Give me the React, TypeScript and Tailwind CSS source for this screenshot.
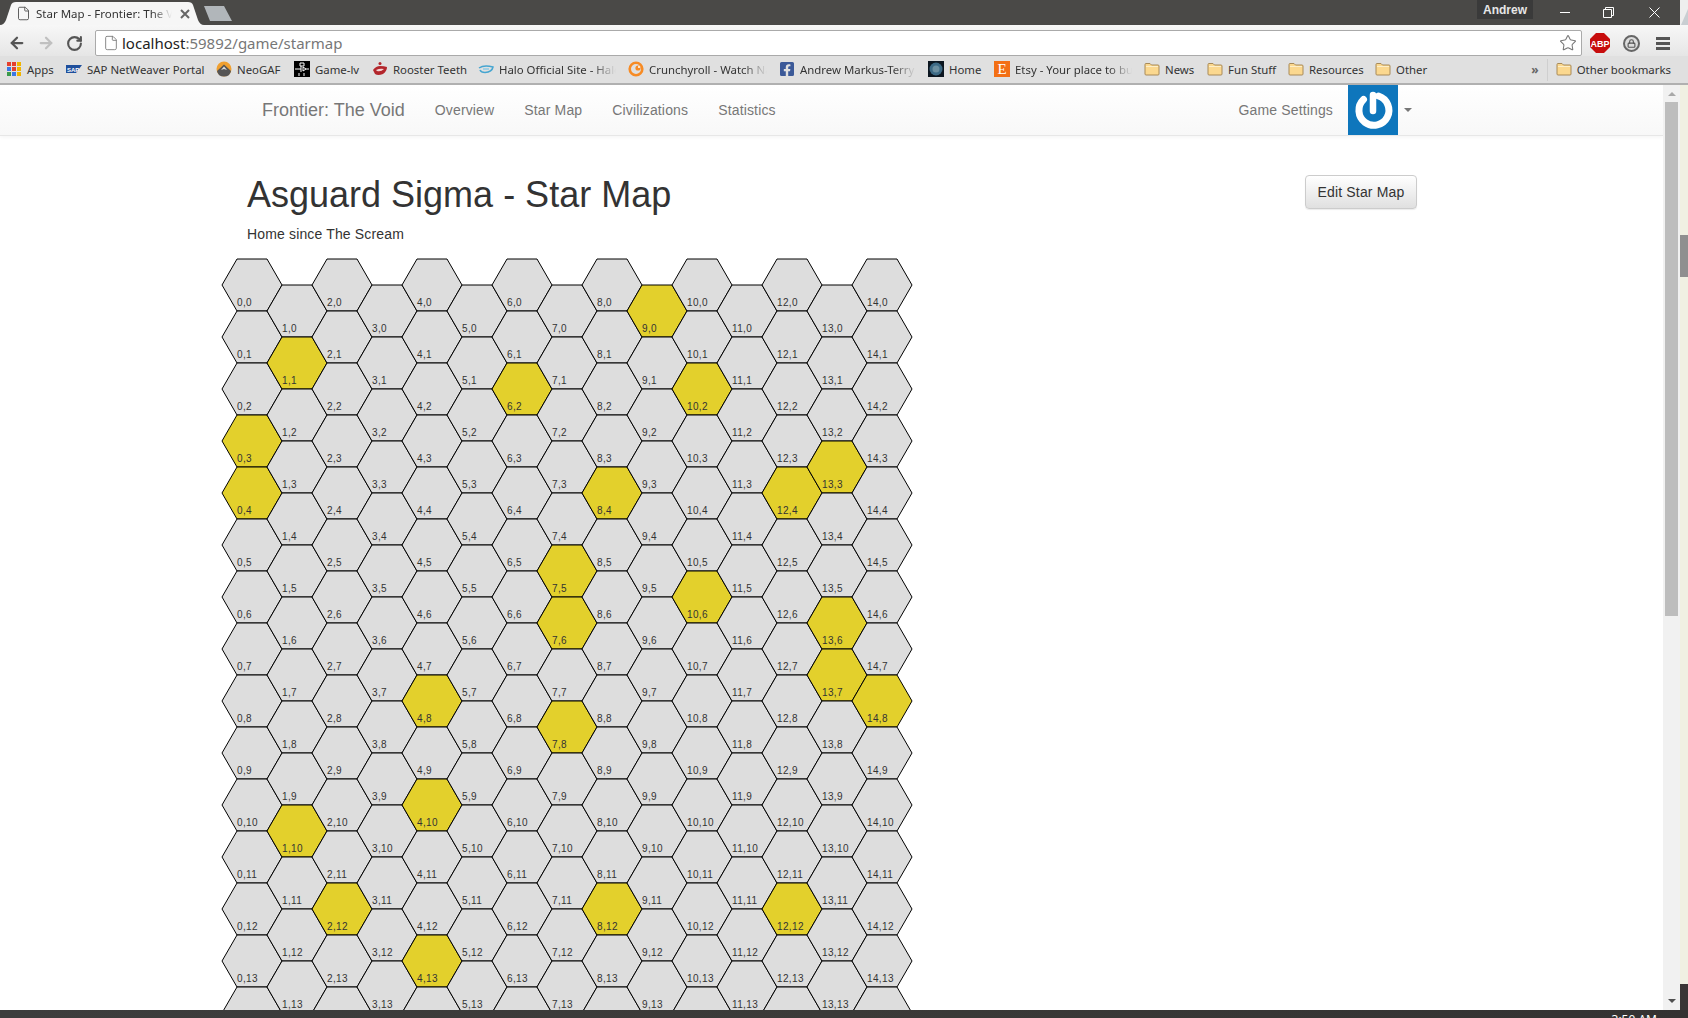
import { ArrowLeft, ArrowRight, RotateCw, Star, File, Lock } from 'lucide-react';
import { FaFacebookSquare } from 'react-icons/fa';

const YELLOW = new Set([
  '9,0', '1,1', '6,2', '10,2', '0,3', '0,4', '13,3', '12,4', '8,4', '7,5', '7,6', '10,6',
  '13,6', '13,7', '14,8', '4,8', '7,8', '4,10', '1,10', '2,12', '8,12', '12,12', '4,13',
]);

const COLUMNS = Array.from({ length: 15 }, (_, i) => i);
const ROWS = Array.from({ length: 15 }, (_, i) => i);

function Hex({ col, row }: { col: number; row: number }) {
  const on = YELLOW.has(`${col},${row}`);
  return (
    <div className="relative h-[52px] w-[60px] shrink-0">
      <svg className="absolute inset-0 overflow-visible" width="60" height="52">
        <polygon
          points="0,26 15,0 45,0 60,26 45,52 15,52"
          fill={on ? '#e3d02c' : '#dddddd'}
          stroke="#000"
          strokeWidth="1"
        />
      </svg>
      {/* the last row runs under the taskbar, its labels never show */}
      {row < 14 && (
        <span className="absolute left-[15px] top-[38px] text-[10px] leading-[12px] tracking-[0.35px] whitespace-nowrap text-[#333]">
          {col},{row}
        </span>
      )}
    </div>
  );
}

function FolderIcon() {
  return (
    <svg width="16" height="16" viewBox="0 0 16 16">
      <path d="M1 3.5 Q1 2.5 2 2.5 H6 L7.5 4 H14 Q15 4 15 5 V13 Q15 14 14 14 H2 Q1 14 1 13 Z" fill="#fbd88f" stroke="#a88a58" strokeWidth="1" />
      <path d="M2 5.5 H14" stroke="#fdeec8" strokeWidth="1" />
    </svg>
  );
}

function AppsIcon() {
  const colors = ['#e5402f', '#e5402f', '#f0b400', '#3b78e7', '#e5402f', '#f0b400', '#3b9a4a', '#3b78e7', '#f0b400'];
  return (
    <div className="grid h-[14px] w-[14px] grid-cols-3 gap-[1px]">
      {colors.map((c, i) => (
        <div key={i} style={{ backgroundColor: c }} />
      ))}
    </div>
  );
}

function SapIcon() {
  return (
    <svg width="16" height="16" viewBox="0 0 16 16">
      <polygon points="0,4 16,4 10,12 0,12" fill="#1f4f9c" />
      <text x="1" y="10.5" fontSize="6" fontWeight="700" fill="#fff" fontFamily="Liberation Sans, sans-serif">SAP</text>
    </svg>
  );
}

function NeoGafIcon() {
  return (
    <svg width="16" height="16" viewBox="0 0 16 16">
      <circle cx="8" cy="8" r="7.5" fill="#f0a030" />
      <path d="M1 10 L8 3.5 L15 10 Q14 15.5 8 15.5 Q2 15.5 1 10 Z" fill="#555" />
      <path d="M5 9 L8 5.5 L11 9 L8 8 Z" fill="#ddd" />
    </svg>
  );
}

function GameIcon() {
  return (
    <svg width="16" height="16" viewBox="0 0 16 16">
      <rect width="16" height="16" fill="#000" />
      <path d="M6 2 H10 V5 H6 Z M1 8 H7 M7 5 V11 M9 6 L12 8 L9 10 Z M12 8 H15 M5 12 V15 M10 12 V15" fill="none" stroke="#fff" strokeWidth="1" />
    </svg>
  );
}

function RoosterIcon() {
  return (
    <svg width="16" height="16" viewBox="0 0 16 16">
      <path d="M1 9 Q4 5 8 5 Q12 5 15 6 Q15 10 11 13 Q6 15 3 13 Z" fill="#b3262c" />
      <path d="M4 9 Q8 7 12 8 Q9 11 5 10 Z" fill="#f4d5d5" />
      <circle cx="8" cy="2.5" r="1.5" fill="#b3262c" />
    </svg>
  );
}

function HaloIcon() {
  return (
    <svg width="16" height="16" viewBox="0 0 16 16">
      <path d="M1 7 Q6 3.5 15 6 Q14 11 7 11.5 Q3 11.5 2 9" fill="none" stroke="#45a5d0" strokeWidth="1.5" />
      <path d="M5 8 H11" stroke="#8ccbe6" strokeWidth="1.5" />
    </svg>
  );
}

function CrunchyIcon() {
  return (
    <svg width="16" height="16" viewBox="0 0 16 16">
      <circle cx="8" cy="8" r="6.3" fill="none" stroke="#f78b24" strokeWidth="2.6" />
      <circle cx="10" cy="7" r="2.6" fill="#f78b24" />
      <circle cx="11" cy="6" r="1" fill="#fff" />
    </svg>
  );
}

function HomeIcon() {
  return (
    <svg width="16" height="16" viewBox="0 0 16 16">
      <rect width="16" height="16" fill="#0c1620" />
      <circle cx="8" cy="8" r="6.5" fill="#3d6a85" />
      <circle cx="8" cy="8" r="3.5" fill="#6c8fa0" />
    </svg>
  );
}

function EtsyIcon() {
  return (
    <div className="flex h-4 w-4 items-center justify-center bg-[#f36f14] font-['Liberation_Serif',serif] text-[15px] leading-none text-white">E</div>
  );
}

const BOOKMARKS = [
  { label: 'SAP NetWeaver Portal', icon: <SapIcon />, width: 'w-[117px]', fade: false },
  { label: 'NeoGAF', icon: <NeoGafIcon />, width: 'w-[45px]', fade: false },
  { label: 'Game-lv', icon: <GameIcon />, width: 'w-[45px]', fade: false },
  { label: 'Rooster Teeth', icon: <RoosterIcon />, width: 'w-[73px]', fade: false },
  { label: 'Halo Official Site - Halo', icon: <HaloIcon />, width: 'w-[117px]', fade: true },
  { label: 'Crunchyroll - Watch Naruto', icon: <CrunchyIcon />, width: 'w-[118px]', fade: true },
  { label: 'Andrew Markus-Terry', icon: <FaFacebookSquare size={16} color="#3b5998" />, width: 'w-[116px]', fade: true },
  { label: 'Home', icon: <HomeIcon />, width: 'w-[33px]', fade: false },
  { label: 'Etsy - Your place to buy', icon: <EtsyIcon />, width: 'w-[117px]', fade: true },
  { label: 'News', icon: <FolderIcon />, width: 'w-[30px]', fade: false },
  { label: 'Fun Stuff', icon: <FolderIcon />, width: 'w-[48px]', fade: false },
  { label: 'Resources', icon: <FolderIcon />, width: 'w-[54px]', fade: false },
  { label: 'Other', icon: <FolderIcon />, width: 'w-[33px]', fade: false },
];

function Bookmark({ label, icon, width, fade }: { label: string; icon: React.ReactNode; width: string; fade: boolean }) {
  return (
    <div className="flex shrink-0 items-center gap-[5px]">
      <div className="flex h-4 w-4 items-center justify-center">{icon}</div>
      <span
        className={`${width} whitespace-nowrap ${fade ? 'overflow-hidden [mask-image:linear-gradient(to_right,black_80%,transparent)]' : ''}`}
      >
        {label}
      </span>
    </div>
  );
}

function GravatarLogo() {
  return (
    <svg width="50" height="50" viewBox="0 0 50 50">
      <path d="M15.5 14.5 A15 15 0 1 0 30.5 11" fill="none" stroke="#fff" strokeWidth="7" strokeLinecap="round" />
      <path d="M25 10 V26" fill="none" stroke="#fff" strokeWidth="6.5" strokeLinecap="round" />
    </svg>
  );
}

function AdblockIcon() {
  return (
    <svg width="20" height="20" viewBox="0 0 20 20">
      <polygon points="6,0 14,0 20,6 20,14 14,20 6,20 0,14 0,6" fill="#c70d0d" />
      <text x="10" y="13.5" textAnchor="middle" fontSize="9" fontWeight="700" fill="#fff" fontFamily="Liberation Sans, sans-serif">ABP</text>
    </svg>
  );
}

export default function App() {
  return (
    <div className="flex h-[1018px] w-[1688px] flex-col overflow-hidden bg-white font-['Liberation_Sans',Arial,sans-serif]">
      {/* title bar */}
      <div className="flex h-[25px] shrink-0">
        <div className="flex flex-1 bg-[#4a4947] font-['Noto_Sans',sans-serif] text-[11.5px] text-[#333]">
          <div className="relative flex h-[25px] w-[204px] shrink-0 items-center pl-[16px] pt-[2px]">
            <svg className="absolute inset-0" width="204" height="25">
              <path d="M0 25 Q4 25 6 20 L11 5 Q12 2 16 2 H188 Q192 2 193 5 L198 20 Q200 25 204 25 Z" fill="#f6f6f6" />
            </svg>
            <File className="relative h-[15px] w-[15px] text-[#555]" strokeWidth={1.5} />
            <span className="relative ml-[5px] w-[136px] overflow-hidden whitespace-nowrap [mask-image:linear-gradient(to_right,black_85%,transparent)]">
              Star Map - Frontier: The Void
            </span>
            <svg className="relative ml-[8px]" width="10" height="10" viewBox="0 0 10 10">
              <path d="M1 1 L9 9 M9 1 L1 9" stroke="#666" strokeWidth="2" />
            </svg>
          </div>
          <svg className="mt-[6px] shrink-0" width="30" height="15" viewBox="0 0 30 15">
            <path d="M0 0 H20 L28 15 H6 Z" fill="#b1b6ba" />
          </svg>
          <div className="ml-auto flex">
            <div className="flex h-[19px] w-[56px] items-center justify-center bg-[#3a3a3a] font-['Liberation_Sans',sans-serif] text-[12px] font-bold text-[#e6e6e6]">
              Andrew
            </div>
            <div className="ml-[27px] mt-[12px] h-[1px] w-[10px] bg-white" />
            <svg className="ml-[33px] mt-[7px]" width="11" height="11" viewBox="0 0 11 11">
              <path d="M0.5 2.5 H8.5 V10.5 H0.5 Z M2.5 2.5 V0.5 H10.5 V8.5 H8.5" fill="none" stroke="#fff" />
            </svg>
            <svg className="ml-[35px] mt-[7px] mr-[20px]" width="11" height="11" viewBox="0 0 11 11">
              <path d="M0.5 0.5 L10.5 10.5 M10.5 0.5 L0.5 10.5" fill="none" stroke="#fff" />
            </svg>
          </div>
        </div>
        <svg className="shrink-0" width="8" height="25" viewBox="0 0 8 25">
          <rect width="8" height="25" fill="#eeeeee" />
          <path d="M1 25 L8 9 V25 Z" fill="#c9ced2" />
        </svg>
      </div>

      {/* toolbar */}
      <div className="flex h-[31px] shrink-0 items-center bg-gradient-to-b from-[#f7f7f7] to-[#e6e6e6] pt-[5px]">
        <ArrowLeft className="ml-[8px] h-[18px] w-[18px] text-[#555]" strokeWidth={3} />
        <ArrowRight className="ml-[11px] h-[18px] w-[18px] text-[#c0c0c0]" strokeWidth={3} />
        <RotateCw className="ml-[11px] h-[17px] w-[17px] text-[#555]" strokeWidth={3} />
        <div className="ml-[12px] flex h-[26px] w-[1487px] items-center rounded-[2px] border border-[#aaaaaa] bg-white pl-[7px] font-['Noto_Sans',sans-serif] text-[15px] text-[#777]">
          <File className="h-[16px] w-[16px] text-[#777]" strokeWidth={1.3} />
          <span className="ml-[3px]">
            <span className="text-[#222]">localhost</span>:59892/game/starmap
          </span>
          <Star className="ml-auto mr-[4px] h-[18px] w-[18px] text-[#777]" strokeWidth={1.4} />
        </div>
        <div className="ml-[8px]">
          <AdblockIcon />
        </div>
        <div className="ml-[13px] flex h-[17px] w-[17px] items-center justify-center rounded-full border-2 border-[#666] bg-[#ddd]">
          <Lock className="h-[9px] w-[9px] text-[#555]" strokeWidth={3} />
        </div>
        <div className="ml-[16px] flex w-[14px] flex-col gap-[2px]">
          <div className="h-[3px] bg-[#555]" />
          <div className="h-[3px] bg-[#555]" />
          <div className="h-[3px] bg-[#555]" />
        </div>
      </div>

      {/* bookmarks bar */}
      <div className="flex h-[29px] shrink-0 items-center gap-[12px] border-b-2 border-[#b0b0b0] bg-[#e0e0e0] pl-[6px] pr-[17px] font-['Noto_Sans',sans-serif] text-[11.4px] text-[#333]">
        <div className="flex shrink-0 items-center gap-[5px]">
          <div className="flex h-4 w-4 items-center justify-center">
            <AppsIcon />
          </div>
          <span className="w-[27px] whitespace-nowrap">Apps</span>
        </div>
        {BOOKMARKS.map((b) => (
          <Bookmark key={b.label} {...b} />
        ))}
        <div className="ml-auto flex items-center gap-[8px]">
          <span className="text-[12px] font-bold text-[#666]">»</span>
          <div className="h-[22px] w-[1px] bg-[#cfcfcf]" />
          <div className="flex items-center gap-[5px]">
            <FolderIcon />
            <span className="whitespace-nowrap">Other bookmarks</span>
          </div>
        </div>
      </div>

      {/* page plus scrollbars */}
      <div className="flex min-h-0 flex-1">
        <div className="min-w-0 flex-1 overflow-hidden text-[14px] tracking-[0.15px] text-[#333]">
          <nav className="flex h-[51px] items-center justify-between border-b border-[#e7e7e7] bg-gradient-to-b from-white to-[#f8f8f8] pl-[262px] pr-[251px] text-[#777] shadow-[0_1px_4px_rgba(0,0,0,0.05)]">
            <div className="flex items-center">
              <span className="mr-[15px] text-[18px] tracking-normal">Frontier: The Void</span>
              <a className="px-[15px]">Overview</a>
              <a className="px-[15px]">Star Map</a>
              <a className="px-[15px]">Civilizations</a>
              <a className="px-[15px]">Statistics</a>
            </div>
            <div className="flex items-center">
              <a className="mr-[15px]">Game Settings</a>
              <div className="flex h-[50px] w-[50px] items-center justify-center bg-[#0e76bc]">
                <GravatarLogo />
              </div>
              <div className="ml-[6px] h-0 w-0 border-x-[4px] border-t-[4px] border-x-transparent border-t-[#777]" />
            </div>
          </nav>

          <div className="pt-[39px]">
            <div className="flex items-start justify-between pl-[247px] pr-[246px]">
              <div>
                <h1 className="mb-[9px] text-[36px] leading-[40px] font-normal tracking-normal">Asguard Sigma - Star Map</h1>
                <p className="leading-[20px]">Home since The Scream</p>
              </div>
              <button className="h-[34px] w-[112px] rounded-[4px] border border-[#cccccc] bg-gradient-to-b from-white to-[#e0e0e0] text-[14px] text-[#333] shadow-[0_1px_1px_rgba(0,0,0,0.08)]">
                Edit Star Map
              </button>
            </div>

            <div className="mt-[15px] flex pl-[222px]">
              {COLUMNS.map((col) => (
                <div key={col} className={`flex flex-col first:ml-0 -ml-[15px] ${col % 2 === 1 ? 'mt-[26px]' : ''}`}>
                  {ROWS.map((row) => (
                    <Hex key={row} col={col} row={row} />
                  ))}
                </div>
              ))}
            </div>
          </div>
        </div>

        {/* page scrollbar */}
        <div className="flex w-[17px] shrink-0 flex-col items-center bg-[#f1f1f1]">
          <div className="mb-[6px] mt-[7px] h-0 w-0 border-x-[4px] border-b-[4px] border-x-transparent border-b-[#a8a8a8]" />
          <div className="h-[514px] w-[13px] bg-[#bdbdbd]" />
          <div className="mt-auto mb-[7px] h-0 w-0 border-x-[4px] border-t-[4px] border-x-transparent border-t-[#505050]" />
        </div>

        {/* window behind */}
        <div className="flex w-[8px] shrink-0 flex-col bg-[#f0f0e2]">
          <div className="mt-[150px] h-[42px] bg-[#8f8f8f]" />
          <div className="mt-auto h-[26px] bg-[#3a3535]" />
        </div>
      </div>

      {/* taskbar */}
      <div className="flex h-[8px] shrink-0 justify-end overflow-hidden bg-gradient-to-r from-[#3d3d3d] via-[#3b3a38] to-[#343232] pr-[31px] pt-[3px] font-['Noto_Sans',sans-serif] text-[12px] leading-[14px] text-white">
        <span>3:50 AM</span>
      </div>
    </div>
  );
}
